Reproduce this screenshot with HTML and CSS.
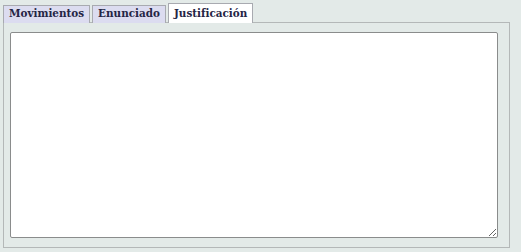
FILE: index.html
```html
<!DOCTYPE html>
<html lang="es">
<head>
  <meta charset="UTF-8">
  <title>Justificación</title>
  <link rel="stylesheet" href="styles.css">
</head>
<body>

  <div class="contenedor">
    <div class="pestanas">
      <div class="pestana">Movimientos</div>
      <div class="pestana">Enunciado</div>
      <div class="pestana activa">Justificación</div>
    </div>

    <div class="panel">
      <textarea class="texto"></textarea>
    </div>
  </div>

</body>
</html>
```

FILE: styles.css
```css
body {
  margin: 0;
  padding: 0;
  background-color: #e3eae8;
  font-family: "DejaVu Serif", serif;
}

.contenedor {
  padding: 3px 11px 4px 3px;
}

.pestanas {
  display: flex;
  align-items: flex-end;
  gap: 2px;
  height: 20px;
  position: relative;
  z-index: 1;
}

.pestana {
  background-color: #dcdcf0;
  color: #252545;
  font-size: 10.4px;
  font-weight: bold;
  padding: 0 5px 3px 5px;
  height: 14px;
  line-height: 14px;
  border: 1px solid #a8aab0;
  border-bottom: none;
  white-space: nowrap;
}

.activa {
  background-color: #ffffff;
  padding-top: 2px;
  padding-bottom: 3px;
}

.panel {
  border: 1px solid #b4b8b8;
  margin-top: -1px;
  padding: 9px 11px 9px 6px;
  height: 206px;
}

.texto {
  display: block;
  box-sizing: border-box;
  width: 100%;
  height: 100%;
  margin: 0;
  background-color: #ffffff;
  border: 1px solid #8a8c8c;
  border-radius: 2px;
}
```
